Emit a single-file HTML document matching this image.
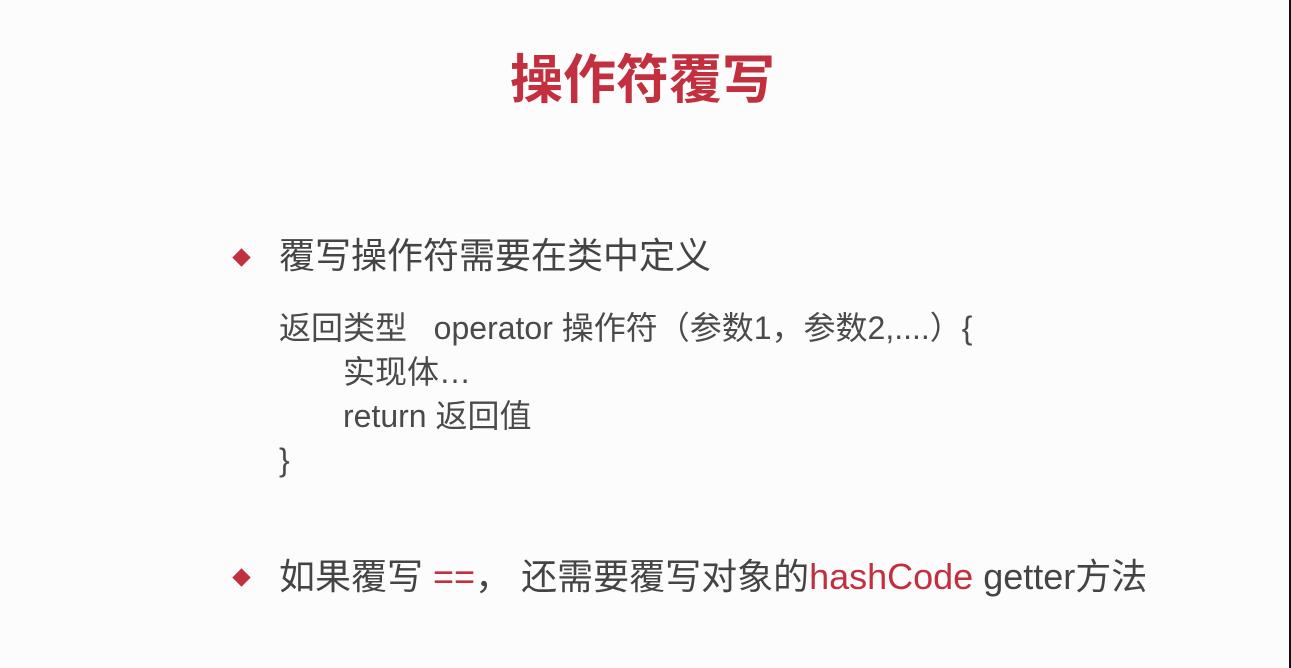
<!DOCTYPE html>
<html><head><meta charset="utf-8"><style>
body{margin:0;width:1291px;height:668px;background:#fcfcfc;position:relative;overflow:hidden;font-family:"Liberation Sans","Noto Sans CJK SC",sans-serif;color:#444}
.edge{position:absolute;right:0;top:0;width:2px;height:668px;background:#111}
.t{position:absolute;left:0;width:1285px;text-align:center;top:46px;font-size:53px;font-weight:bold;color:#c2303f;line-height:70px}
.d{position:absolute;width:13px;height:13px;background:#c2303f;transform:rotate(45deg)}
.l{position:absolute;white-space:nowrap}
.b{font-size:36px;line-height:44px}
.c{font-size:32px;line-height:44px;color:#4a4a4a}
.r{color:#c2303f}
</style></head><body>
<div class="edge"></div>
<div class="t">操作符覆写</div>
<div class="d" style="left:235px;top:251px"></div>
<div class="l b" style="left:279px;top:234px">覆写操作符需要在类中定义</div>
<div class="l c" style="left:279px;top:306px">返回类型&nbsp;&nbsp;&nbsp;operator 操作符（参数1，参数2,....）{</div>
<div class="l c" style="left:343px;top:350px">实现体…</div>
<div class="l c" style="left:343px;top:394px">return 返回值</div>
<div class="l c" style="left:279px;top:438px">}</div>
<div class="d" style="left:235px;top:571px"></div>
<div class="l b" style="left:279px;top:555px">如果覆写 <span class="r">==</span>， 还需要覆写对象的<span class="r">hashCode</span> getter方法</div>
</body></html>
